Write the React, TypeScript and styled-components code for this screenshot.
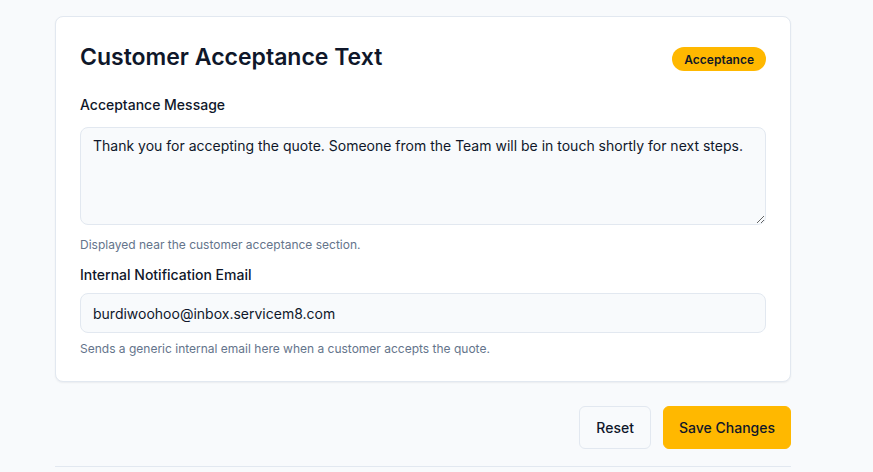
import React from "react";
import styled, { createGlobalStyle } from "styled-components";

const GlobalStyle = createGlobalStyle`
  * { box-sizing: border-box; }
  html, body { margin: 0; padding: 0; background: #f8fafc; }
  body { font-family: Inter, "Noto Sans", sans-serif; color: #0f172a; -webkit-font-smoothing: antialiased; }
`;

const Page = styled.div`
  width: 873px;
  height: 472px;
  overflow: hidden;
  padding: 16px 0 0 55px;
`;

const Column = styled.div`
  width: 736px;
  display: flex;
  flex-direction: column;
`;

const Card = styled.section`
  background: #ffffff;
  border: 1px solid #e2e8f0;
  border-radius: 8px;
  box-shadow: 0 1px 2px rgba(15, 23, 42, 0.06);
  padding: 24px 24px 24px;
  display: flex;
  flex-direction: column;
`;

const Header = styled.div`
  display: flex;
  align-items: center;
  justify-content: space-between;
  height: 32px;
  margin-bottom: 22px;
`;

const Title = styled.h2`
  margin: 0;
  font-size: 23px;
  line-height: 32px;
  font-weight: 600;
  color: #0f172a;
`;

const Badge = styled.span`
  display: inline-flex;
  align-items: center;
  height: 24px;
  padding: 0 12px;
  border-radius: 999px;
  background: #ffb800;
  color: #111827;
  font-size: 12px;
  font-weight: 600;
  margin-top: 4px;
`;

const Label = styled.label<{ $gap: number }>`
  display: block;
  font-size: 14px;
  line-height: 20px;
  font-weight: 500;
  color: #0f172a;
  margin-bottom: ${(p) => p.$gap}px;
`;

const TextArea = styled.textarea`
  display: block;
  width: 100%;
  height: 98px;
  padding: 8px 12px;
  border: 1px solid #e2e8f0;
  border-radius: 8px;
  background: #f8fafc;
  font-family: Inter, "Noto Sans", sans-serif;
  font-size: 14px;
  line-height: 20px;
  color: #0f172a;
  resize: vertical;
  outline: none;
`;

const Input = styled.input`
  display: block;
  width: 100%;
  height: 40px;
  padding: 0 12px;
  border: 1px solid #e2e8f0;
  border-radius: 8px;
  background: #f8fafc;
  font-family: Inter, "Noto Sans", sans-serif;
  font-size: 14px;
  color: #0f172a;
  outline: none;
`;

const Help = styled.p<{ $top: number; $bottom?: number }>`
  margin: ${(p) => p.$top}px 0 ${(p) => p.$bottom ?? 0}px;
  font-size: 12px;
  line-height: 16px;
  color: #64748b;
`;

const Actions = styled.div`
  display: flex;
  justify-content: flex-end;
  gap: 12px;
  margin-top: 24px;
  padding-bottom: 17px;
  border-bottom: 1px solid #e2e8f0;
`;

const Button = styled.button<{ $primary?: boolean }>`
  height: 43px;
  padding: 0 ${(p) => (p.$primary ? 15 : 16)}px;
  border-radius: 6px;
  border: 1px solid ${(p) => (p.$primary ? "#ffb800" : "#e2e8f0")};
  background: ${(p) => (p.$primary ? "#ffb800" : "#f8fafc")};
  color: #0f172a;
  font-family: Inter, "Noto Sans", sans-serif;
  font-size: 14px;
  font-weight: 500;
  cursor: pointer;
`;

export default function App() {
  return (
    <>
      <GlobalStyle />
      <Page>
        <Column>
          <Card>
            <Header>
              <Title>Customer Acceptance Text</Title>
              <Badge>Acceptance</Badge>
            </Header>
            <Label $gap={12}>Acceptance Message</Label>
            <TextArea defaultValue="Thank you for accepting the quote. Someone from the Team will be in touch shortly for next steps." />
            <Help $top={12} $bottom={12}>Displayed near the customer acceptance section.</Help>
            <Label $gap={8}>Internal Notification Email</Label>
            <Input defaultValue="burdiwoohoo@inbox.servicem8.com" />
            <Help $top={8}>Sends a generic internal email here when a customer accepts the quote.</Help>
          </Card>
          <Actions>
            <Button>Reset</Button>
            <Button $primary>Save Changes</Button>
          </Actions>
        </Column>
      </Page>
    </>
  );
}
